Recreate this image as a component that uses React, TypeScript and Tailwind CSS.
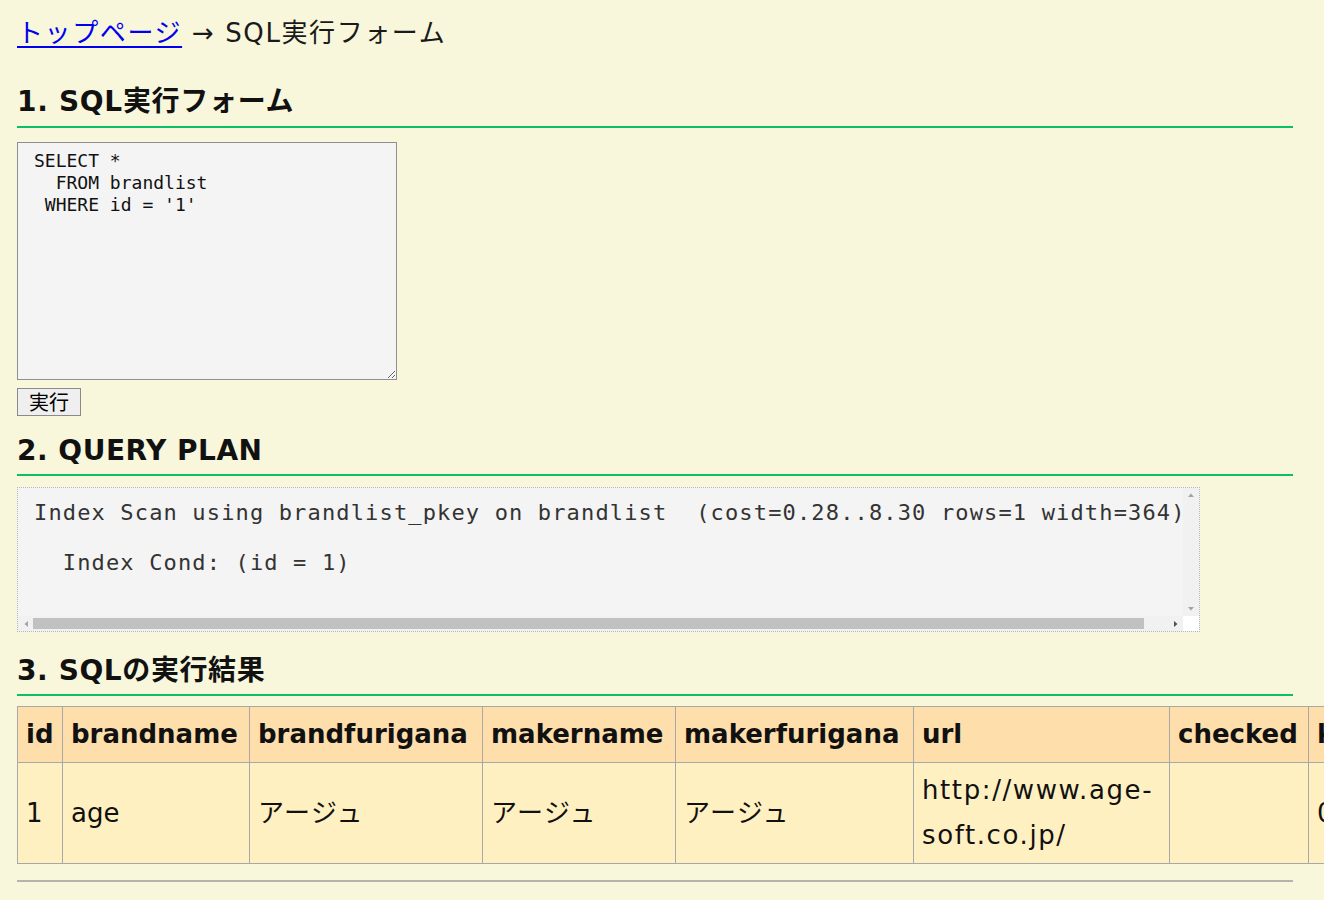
import React from "react";

const sqlText = "SELECT *\n  FROM brandlist\n WHERE id = '1'";

function TriUp() {
  return (
    <svg width="8" height="6" viewBox="0 0 8 6">
      <path d="M1 5 L4 1.5 L7 5 Z" fill="#a3a3a3" />
    </svg>
  );
}
function TriDown() {
  return (
    <svg width="8" height="6" viewBox="0 0 8 6">
      <path d="M1 1 L4 4.5 L7 1 Z" fill="#a3a3a3" />
    </svg>
  );
}
function TriLeft() {
  return (
    <svg width="6" height="8" viewBox="0 0 6 8">
      <path d="M5 1 L1.5 4 L5 7 Z" fill="#a3a3a3" />
    </svg>
  );
}
function TriRight() {
  return (
    <svg width="6" height="8" viewBox="0 0 6 8">
      <path d="M1 1 L4.5 4 L1 7 Z" fill="#505050" />
    </svg>
  );
}

export default function App() {
  const th = "border border-[#a8a8a8] bg-[#fedfac] px-[8px] py-[5px] text-left align-middle font-bold leading-[45px] whitespace-nowrap overflow-hidden";
  const td = "border border-[#a8a8a8] bg-[#fff0c2] px-[8px] py-[5px] text-left align-middle font-normal leading-[45px] overflow-hidden";
  const tdWide = td + " tracking-[1.5px]";
  return (
    <div className="min-h-screen w-[1324px] overflow-hidden bg-[#f8f7dc] font-['DejaVu_Sans','Noto_Sans_CJK_JP',sans-serif] text-[#1a1a1a]">
      <div className="w-[1293px] pl-[17px] pb-[18px]">
        <p className="pt-[14px] text-[26px] leading-[38px] tracking-[1.6px] whitespace-nowrap">
          <a href="#" className="text-[#0000ee] underline underline-offset-[4px]">トップページ</a>
          <span> → SQL実行フォーム</span>
        </p>

        <h2 className="mt-[32px] border-b-2 border-[#0bbf66] pb-[6px] text-[28px] font-bold leading-[36px] tracking-[0.7px] text-[#111]">
          1. SQL実行フォーム
        </h2>

        <div className="mt-[14px] flex flex-col items-start">
          <textarea
            readOnly
            defaultValue={sqlText}
            className="block h-[238px] w-[380px] border border-[#8f8f8f] bg-[#f4f4f4] px-[16px] pt-[7px] font-['DejaVu_Sans_Mono',monospace] text-[18px] leading-[22px] text-[#111] outline-none"
            style={{ resize: "both" }}
          />
          <button className="mt-[8px] flex h-[28px] w-[64px] items-center justify-center border border-[#8a8a8a] bg-[#efefef] font-['Noto_Sans_CJK_JP',sans-serif] text-[20px] leading-none text-black">
            実行
          </button>
        </div>

        <h2 className="mt-[17px] border-b-2 border-[#0bbf66] pb-[5px] text-[28px] font-bold leading-[36px] tracking-[0.5px] text-[#111]">
          2. QUERY PLAN
        </h2>

        <div className="mt-[11px] flex h-[145px] w-[1183px] flex-col border border-dotted border-[#b8b8b8] bg-[#f4f4f4]">
          <div className="flex min-h-0 flex-1">
            <div className="min-w-0 flex-1 overflow-hidden pl-[16px] font-['DejaVu_Sans_Mono',monospace] text-[22px] leading-[50px] tracking-[1.15px] text-[#333] whitespace-pre">
              <div>Index Scan using brandlist_pkey on brandlist  (cost=0.28..8.30 rows=1 width=364)</div>
              <div>  Index Cond: (id = 1)</div>
            </div>
            <div className="flex w-[16px] flex-col items-center justify-between bg-[#f1f1f1] py-[4px]">
              <TriUp />
              <TriDown />
            </div>
          </div>
          <div className="flex h-[15px]">
            <div className="flex flex-1 items-center bg-[#f1f1f1]">
              <div className="flex w-[15px] justify-center">
                <TriLeft />
              </div>
              <div className="h-[11px] w-[1111px] bg-[#c1c1c1]" />
              <div className="flex flex-1 justify-end pr-[4px]">
                <TriRight />
              </div>
            </div>
            <div className="w-[16px] bg-white" />
          </div>
        </div>

        <h2 className="mt-[21px] border-b-2 border-[#0bbf66] pb-[5px] text-[28px] font-bold leading-[36px] tracking-[0.6px] text-[#111]">
          3. SQLの実行結果
        </h2>

        <table className="mt-[10px] w-[1420px] table-fixed border-collapse text-[26px] text-[#111]">
          <colgroup>
            <col className="w-[45px]" />
            <col className="w-[187px]" />
            <col className="w-[233px]" />
            <col className="w-[193px]" />
            <col className="w-[238px]" />
            <col className="w-[256px]" />
            <col className="w-[139px]" />
            <col className="w-[129px]" />
          </colgroup>
          <thead>
            <tr>
              <th className={th}>id</th>
              <th className={th}>brandname</th>
              <th className={th}>brandfurigana</th>
              <th className={th}>makername</th>
              <th className={th}>makerfurigana</th>
              <th className={th}>url</th>
              <th className={th}>checked</th>
              <th className={th}>kind</th>
            </tr>
          </thead>
          <tbody>
            <tr>
              <td className={td}>1</td>
              <td className={td}>age</td>
              <td className={tdWide}>アージュ</td>
              <td className={tdWide}>アージュ</td>
              <td className={tdWide}>アージュ</td>
              <td className={td + " tracking-[1.6px]"}>http://www.age-soft.co.jp/</td>
              <td className={td}></td>
              <td className={td}>0</td>
            </tr>
          </tbody>
        </table>

        <div className="mt-[16px] w-[1276px] border-t-2 border-[#b4b4ac]" />
      </div>
    </div>
  );
}
